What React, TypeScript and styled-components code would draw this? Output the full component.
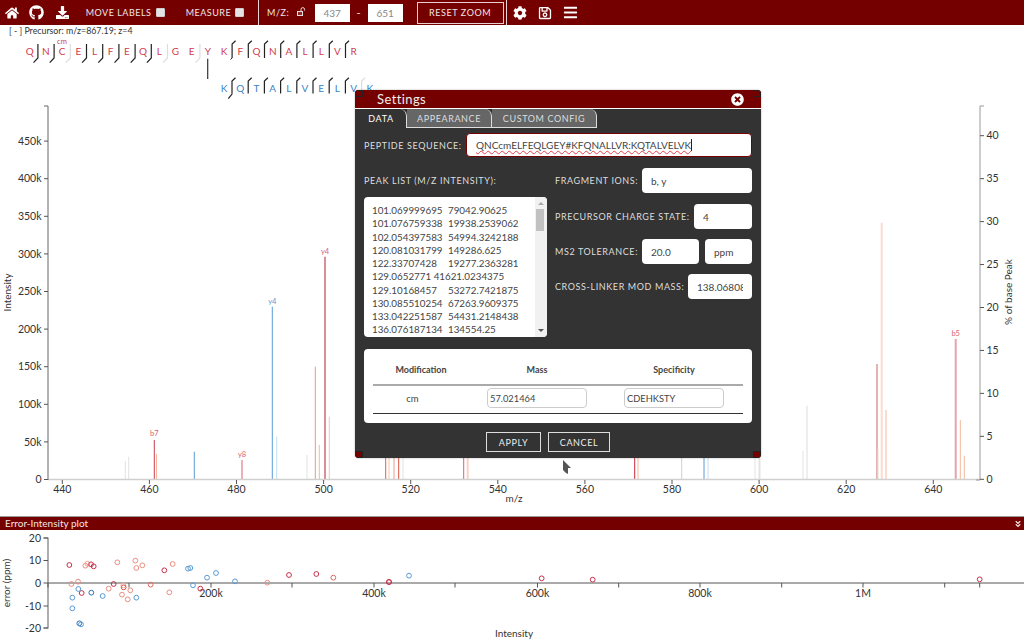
import React from "react";
import styled, { createGlobalStyle } from "styled-components";
import {
  FaHome,
  FaGithub,
  FaDownload,
  FaCog,
  FaRegSave,
  FaBars,
  FaTimesCircle,
  FaAngleDoubleDown,
} from "react-icons/fa";

const MAROON = "#750000";
const FONT = `Lato, "Open Sans", "Liberation Sans", sans-serif`;

const Global = createGlobalStyle`
  html, body { margin: 0; padding: 0; background: #fff; overflow: hidden; }
  body { font-family: ${FONT}; }
  * { box-sizing: border-box; }
`;

const Page = styled.div`
  position: relative;
  width: 1024px;
  height: 644px;
  display: flex;
  flex-direction: column;
  overflow: hidden;
`;

/* ---------- top toolbar ---------- */
const TopBar = styled.div`
  flex: none;
  height: 25px;
  background: ${MAROON};
  display: flex;
  align-items: center;
  color: #fff;
`;
const IconSlot = styled.div<{ $w: number }>`
  width: ${(p) => p.$w}px;
  display: flex;
  justify-content: center;
  align-items: center;
  flex: none;
`;
const BarLabel = styled.span<{ $ml: number; $w: number }>`
  margin-left: ${(p) => p.$ml}px;
  width: ${(p) => p.$w}px;
  flex: none;
  font-size: 9px;
  letter-spacing: 0.5px;
  color: #efe4e4;
  white-space: nowrap;
`;
const Check = styled.span`
  width: 9px;
  height: 9px;
  margin-left: 3px;
  flex: none;
  background: #e4e4e4;
  border: 1px solid #cfcfcf;
  border-radius: 1px;
`;
const Divider = styled.span<{ $ml: number }>`
  margin-left: ${(p) => p.$ml}px;
  width: 1px;
  height: 25px;
  flex: none;
  background: #ead6d6;
`;
const LockIcon = styled.svg`
  display: block;
  margin-bottom: 3px;
`;
const RangeInput = styled.input`
  width: 35px;
  height: 18px;
  flex: none;
  border: 0;
  padding: 0;
  text-align: center;
  font: 10px ${FONT};
  color: #888;
  background: #fff;
`;
const Dash = styled.span`
  width: 18px;
  text-align: center;
  font-size: 11px;
  color: #f3e6e6;
  flex: none;
`;
const ResetButton = styled.button`
  margin-left: 14px;
  width: 87px;
  height: 22px;
  flex: none;
  background: ${MAROON};
  border: 1px solid #e8cfcf;
  color: #f2e4e4;
  font: 9px ${FONT};
  letter-spacing: 0.6px;
  padding: 0;
`;

/* ---------- spectrum ---------- */
const ChartArea = styled.div`
  position: relative;
  flex: none;
  height: 491px;
`;
const ChartSvg = styled.svg`
  display: block;
  width: 1024px;
  height: 491px;
  font-family: ${FONT};
`;
const PrecursorLine = styled.div`
  position: absolute;
  left: 9px;
  top: 0;
  font-size: 8.8px;
  line-height: 12px;
  color: #333;
  white-space: pre;
`;

/* ---------- error plot ---------- */
const ErrorBar = styled.div`
  flex: none;
  height: 14px;
  border-top: 1px solid #999;
  background: ${MAROON};
  color: #f2e4e4;
  font-size: 10px;
  line-height: 13px;
  padding: 0 2px 0 5px;
  display: flex;
  justify-content: space-between;
  align-items: center;
`;
const ErrorSvg = styled.svg`
  display: block;
  width: 1024px;
  height: 114px;
  flex: none;
  font-family: ${FONT};
`;

/* ---------- settings modal ---------- */
const Modal = styled.div`
  position: absolute;
  left: 355px;
  top: 90px;
  width: 406px;
  height: 368px;
  background: #333;
  border-radius: 4px;
  overflow: hidden;
  display: flex;
  flex-direction: column;
  box-shadow: 0 0 2px rgba(0, 0, 0, 0.35);
`;
const ModalHeader = styled.div`
  flex: none;
  height: 19px;
  background: ${MAROON};
  border-bottom: 1px solid #fff;
  display: flex;
  align-items: center;
  justify-content: space-between;
  padding: 0 17px 0 22px;
  color: #eee;
  font-size: 13px;
  letter-spacing: 0.4px;
`;
const TabRow = styled.div`
  flex: none;
  height: 19px;
  display: flex;
  padding-left: 1px;
`;
const Tab = styled.div<{ $w: number; $active?: boolean }>`
  width: ${(p) => p.$w}px;
  background: ${(p) => (p.$active ? "#333" : "#666")};
  border-right: 1px solid #ddd;
  border-bottom: ${(p) => (p.$active ? "0" : "1px solid #ddd")};
  border-top-right-radius: 7px;
  color: ${(p) => (p.$active ? "#fff" : "#ddd")};
  font-size: 9px;
  letter-spacing: 0.6px;
  line-height: 19px;
  text-align: center;
`;
const FieldRow = styled.div<{ $mt?: number }>`
  display: flex;
  align-items: center;
  justify-content: space-between;
  margin-top: ${(p) => p.$mt ?? 0}px;
`;
const PeptideRow = styled(FieldRow)`
  flex: none;
  margin: 5px 9px 0;
`;
const FieldLabel = styled.label`
  font-size: 9px;
  letter-spacing: 0.6px;
  color: #ddd;
  white-space: nowrap;
`;
const PeptideBox = styled.div`
  width: 286px;
  height: 24px;
  background: #fff;
  border: 1px solid ${MAROON};
  border-radius: 4px;
  padding-left: 9px;
  display: flex;
  align-items: center;
  font-size: 10px;
  color: #444;
  white-space: nowrap;
`;
const Spell = styled.span`
  text-decoration: underline wavy #e0404a 1px;
  text-underline-offset: 1px;
  border-right: 1px solid #222;
`;
const Columns = styled.div`
  flex: none;
  display: flex;
  justify-content: space-between;
  margin: 11px 9px 0;
`;
const LeftColumn = styled.div`
  width: 183px;
`;
const RightColumn = styled.div`
  width: 197px;
`;
const PeakTitle = styled.div`
  height: 25px;
  line-height: 25px;
  margin-bottom: 4px;
  font-size: 9px;
  letter-spacing: 0.6px;
  color: #ddd;
`;
const PeakBox = styled.div`
  position: relative;
  height: 140px;
  background: #fff;
  border-radius: 4px;
  overflow: hidden;
  padding: 7px 0 0 8px;
  font-size: 9.8px;
  line-height: 13.27px;
  color: #444;
  white-space: pre;
  tab-size: 76px;
`;
const ScrollTrack = styled.div`
  position: absolute;
  right: 0;
  top: 0;
  bottom: 0;
  width: 12px;
  background: #f1f1f1;
`;
const ScrollThumb = styled.div`
  position: absolute;
  left: 1px;
  right: 3px;
  top: 12px;
  height: 22px;
  background: #c1c1c1;
`;
const ScrollArrow = styled.div<{ $down?: boolean }>`
  position: absolute;
  left: 3px;
  ${(p) => (p.$down ? "bottom: 5px;" : "top: 5px;")}
  width: 0;
  height: 0;
  border-left: 3px solid transparent;
  border-right: 3px solid transparent;
  ${(p) => (p.$down ? "border-top: 3px solid #555;" : "border-bottom: 3px solid #aaa;")}
`;
const ValueInput = styled.input<{ $w: number }>`
  width: ${(p) => p.$w}px;
  height: 25px;
  flex: none;
  border: 0;
  border-radius: 4px;
  background: #fff;
  padding: 0 9px;
  font: 10px ${FONT};
  color: #444;
  outline: none;
`;
const InputPair = styled.div`
  display: flex;
  gap: 6px;
`;
const TablePanel = styled.div`
  flex: none;
  height: 74px;
  margin: 12px 9px 0;
  background: #fff;
  border-radius: 4px;
  padding: 0 9px;
`;
const TableHead = styled.div`
  display: grid;
  grid-template-columns: 96px 136px 138px;
  height: 37px;
  border-bottom: 2px solid #aaa;
  align-items: center;
  justify-items: center;
  padding-top: 5px;
  font-size: 9px;
  font-weight: 700;
  color: #444;
`;
const TableRow = styled.div`
  display: grid;
  grid-template-columns: 96px 136px 138px;
  height: 28px;
  border-bottom: 1px solid #333;
  align-items: center;
  justify-items: center;
  padding-bottom: 3px;
`;
const ModCell = styled.div`
  padding-right: 17px;
  font-size: 9.5px;
  color: #444;
`;
const MassInput = styled.input`
  width: 100px;
  height: 20px;
  border: 1px solid #ccc;
  border-radius: 4px;
  padding: 0 2px;
  font: 9.3px ${FONT};
  color: #444;
  background: #fff;
`;
const ButtonRow = styled.div`
  flex: none;
  display: flex;
  gap: 7px;
  margin-top: 9px;
  padding-left: 131px;
`;
const ModalButton = styled.button<{ $w: number }>`
  width: ${(p) => p.$w}px;
  height: 20px;
  background: #333;
  border: 1px solid #ddd;
  color: #eee;
  font: 9px ${FONT};
  letter-spacing: 0.6px;
  padding: 0;
`;
const Handle = styled.div<{ $x: "left" | "right"; $y: "top" | "bottom" }>`
  position: absolute;
  ${(p) => p.$x}: 0;
  ${(p) => p.$y}: 0;
  width: 8px;
  height: 7px;
  background: ${MAROON};
  border: 1px solid #222;
`;
const Cursor = styled.svg`
  position: absolute;
  left: 562px;
  top: 460px;
`;

/* ---------- data ---------- */
type Peak = [number, number, string, number?];
const GRAY = "#e2e2e2";
const PEACH = "#f6b89c";
const SALMON = "#e89a8e";
const RED = "#cf3d50";
const PINK = "#d98e98";
const BLUE = "#5b9bd5";
const LBLUE = "#c4def2";
const peaks: Peak[] = [
  [125.3, 460.7, GRAY],
  [128.7, 456.7, GRAY],
  [154.3, 440, RED],
  [156.5, 454, PEACH],
  [194.3, 451.7, BLUE],
  [242, 460, "#d9606f"],
  [272.3, 306.7, BLUE],
  [276.7, 436.7, LBLUE],
  [307, 455, GRAY],
  [315.3, 366.7, SALMON],
  [319.3, 445, PEACH],
  [325, 256.7, PINK, 2],
  [329.3, 416.7, "#f6c6ae"],
  [385.7, 440, "#e0604f"],
  [389, 450, "#f6c6ae"],
  [394, 440, SALMON],
  [398.7, 440, "#d9503f"],
  [403, 440, GRAY],
  [463.7, 440, "#d9606f"],
  [467.7, 440, "#f8d3c4", 2],
  [634.7, 440, "#c8283a"],
  [638, 440, "#f6b89c"],
  [681.7, 440, "#cfcfcf"],
  [704, 440, BLUE],
  [708, 440, LBLUE],
  [755, 440, GRAY],
  [759.5, 440, GRAY, 2],
  [803, 451, GRAY],
  [807, 405.7, "#dddddd"],
  [877, 364, "#c96a5c"],
  [878, 449, "#e0e0e0"],
  [881.7, 222.7, "#fbdccf", 2],
  [886, 410, PEACH],
  [955.7, 339, "#e5a3ab", 2],
  [960.3, 420, PEACH],
  [964.3, 455.7, PEACH],
];
const peakLabels: [number, number, string, string][] = [
  [154.3, 436, "b7", "#d9606f"],
  [242, 457, "y8", "#d9606f"],
  [272.3, 304, "y4", BLUE],
  [325, 254, "y4", "#d9606f"],
  [955.7, 336, "b5", "#d9606f"],
];
const leftTicks = ["0", "50k", "100k", "150k", "200k", "250k", "300k", "350k", "400k", "450k"];
const rightTicks = [0, 5, 10, 15, 20, 25, 30, 35, 40];
const xTicks = [440, 460, 480, 500, 520, 540, 560, 580, 600, 620, 640];
const mzX = (m: number) => 62.3 + (m - 440) * 4.355;

const topLetters = "QNCELFEQLGEYKFQNALLVR".split("");
const bottomLetters = "KQTALVELVK".split("");
const topHooks: (string | null)[] = [
  "#222", "#222", "#ddd", "#222", "#222", "#222", "#222", "#222", "#ddd", null, "#ddd",
];
const letterX = (i: number) => 29.7 + i * 16.2;
const bottomX = (i: number) => 224 + i * 16.2;

const DR = "#c8304a";
const SL = "#ea8f80";
const BL = "#5b9bd5";
const DB = "#2f6fb5";
const points: [number, number, string][] = [
  [208, 165, DR], [214, 222, SL], [234, 215, SL], [256, 167, SL], [262, 161, "#f0a890"],
  [273, 163, DR], [281, 169, DR], [245, 249, DR], [235, 237, BL], [217, 263, BL],
  [217, 295, BL], [238, 340, DB], [243, 343, BL], [274, 248, DB], [308, 258, BL],
  [326, 236, SL], [341, 222, DR], [352, 157, SL], [366, 254, SL], [370, 226, "#f0b0a0"],
  [371, 232, "#d9503f"], [383, 268, SL], [391, 241, SL], [406, 152, SL], [409, 174, SL],
  [409, 263, BL], [427, 166, SL], [452, 224, "#dd6a60"], [493, 181, DR], [508, 247, SL],
  [518, 162, SL], [564, 176, BL], [571, 174, BL], [579, 226, BL], [601, 236, DR],
  [621, 203, BL], [648, 189, BL], [705, 214, BL], [802, 218, SL], [867, 195, DR],
  [949, 192, DR], [1000, 203, "#dd6a60"], [1167, 216, DR], [1167, 216, DR], [1227, 197, BL],
  [1625, 205, DR], [1778, 209, DR], [2939, 208, DR],
];
const errXTicks = [48, 129, 211, 292, 374, 455, 537.5, 618.7, 700, 781.7, 863, 944.7, 979.7];
const errXLabels: [number, string][] = [
  [211, "200k"], [374, "400k"], [537.5, "600k"], [700, "800k"], [863, "1M"],
];
const errYTicks: [number, string][] = [
  [538, "20"], [560.5, "10"], [583, "0"], [606, "-10"], [628, "-20"],
];
const peakRows = [
  "101.069999695\t79042.90625",
  "101.076759338\t19938.2539062",
  "102.054397583\t54994.3242188",
  "120.081031799\t149286.625",
  "122.33707428\t19277.2363281",
  "129.0652771 41621.0234375",
  "129.10168457\t53272.7421875",
  "130.085510254\t67263.9609375",
  "133.042251587\t54431.2148438",
  "136.076187134\t134554.25",
].join("\n");

const Noop = () => {};

export default function App() {
  return (
    <Page>
      <Global />
      <TopBar>
        <IconSlot $w={23}><FaHome size={14} /></IconSlot>
        <IconSlot $w={27}><FaGithub size={15} /></IconSlot>
        <IconSlot $w={24}><FaDownload size={13} /></IconSlot>
        <BarLabel $ml={11.7} $w={67}>MOVE LABELS</BarLabel>
        <Check />
        <BarLabel $ml={21} $w={46.4}>MEASURE</BarLabel>
        <Check />
        <Divider $ml={14} />
        <BarLabel $ml={8} $w={22}>M/Z:</BarLabel>
        <IconSlot $w={25.5}>
          <LockIcon width="9" height="9" viewBox="0 0 9 9">
            <rect x="0.5" y="4.5" width="5" height="4" fill="#8a2a2a" stroke="#eadcdc" strokeWidth="1" />
            <path d="M4 4.5 V2.4 a1.8 1.8 0 0 1 3.6 0 V3.6" fill="none" stroke="#eadcdc" strokeWidth="1" />
          </LockIcon>
        </IconSlot>
        <RangeInput readOnly value="437" />
        <Dash>-</Dash>
        <RangeInput readOnly value="651" />
        <ResetButton>RESET ZOOM</ResetButton>
        <Divider $ml={2} />
        <IconSlot $w={26}><FaCog size={14} /></IconSlot>
        <IconSlot $w={24}><FaRegSave size={14} /></IconSlot>
        <IconSlot $w={28}><FaBars size={15} /></IconSlot>
      </TopBar>

      <ChartArea>
        <ChartSvg viewBox="0 25 1024 491">
          {/* fragment sequence */}
          {topLetters.map((l, i) => (
            <text key={i} x={letterX(i)} y={54.5} textAnchor="middle" fontSize={10} fill="#cf3d50">{l}</text>
          ))}
          <text x={62} y={43.5} textAnchor="middle" fontSize={7.5} fill="#cf3d50">cm</text>
          {topHooks.map((c, i) =>
            c ? (
              <path key={i} d={`M${letterX(i) + 8.2} 44 V58 L${letterX(i) + 3.8} 62.7`} fill="none" stroke={c} strokeWidth={1.2} />
            ) : null
          )}
          {Array.from({ length: 8 }).map((_, i) => (
            <path key={i} d={`M${letterX(12 + i) + 8} 58 V44 L${letterX(12 + i) + 11.5} 40.7`} fill="none" stroke="#222" strokeWidth={1.2} />
          ))}
          <path d="M232.1 58 L230.5 59.5" stroke="#222" strokeWidth={1} fill="none" />
          <path d="M207.7 58.7 V79" stroke="#333" strokeWidth={1.2} />
          {bottomLetters.map((l, i) => (
            <text key={i} x={bottomX(i)} y={92} textAnchor="middle" fontSize={10} fill="#3b82c4">{l}</text>
          ))}
          {Array.from({ length: 9 }).map((_, i) => (
            <path
              key={i}
              d={`M${bottomX(i) + 8} 93.5 V81 L${bottomX(i) + 11.5} 77.7`}
              fill="none"
              stroke={i === 8 ? "#ddd" : "#222"}
              strokeWidth={1.2}
            />
          ))}
          <path d="M232 93.5 V94 L228.3 98.7" stroke="#222" strokeWidth={1.2} fill="none" />

          {/* peaks */}
          {peaks.map(([x, top, c, w], i) => (
            <line key={i} x1={x} x2={x} y1={top} y2={479} stroke={c} strokeWidth={w ?? 1} />
          ))}
          {peakLabels.map(([x, y, t, c], i) => (
            <text key={i} x={x} y={y} textAnchor="middle" fontSize={7.5} fill={c}>{t}</text>
          ))}

          {/* axes */}
          <line x1={48} x2={980} y1={479.5} y2={479.5} stroke="#cfcfcf" strokeWidth={1.5} />
          <path d="M44 106 H48 V480" fill="none" stroke="#666" strokeWidth={1} />
          <path d="M984 106 H980 V480 H976" fill="none" stroke="#999" strokeWidth={1} />
          {leftTicks.map((t, i) => {
            const y = 479.5 - i * 37.6;
            return (
              <g key={t}>
                <line x1={44} x2={48} y1={y} y2={y} stroke="#555" />
                <text x={41.5} y={y + 3.6} textAnchor="end" fontSize={10.5} fill="#333">{t}</text>
              </g>
            );
          })}
          {rightTicks.map((t, i) => {
            const y = 479.3 - i * 42.95;
            return (
              <g key={t}>
                <line x1={980} x2={984} y1={y} y2={y} stroke="#555" />
                <text x={986.5} y={y + 3.6} fontSize={10.5} fill="#333">{t}</text>
              </g>
            );
          })}
          {xTicks.map((m) => (
            <g key={m}>
              <line x1={mzX(m)} x2={mzX(m)} y1={480} y2={484} stroke="#555" />
              <text x={mzX(m)} y={493} textAnchor="middle" fontSize={10.5} fill="#333">{m}</text>
            </g>
          ))}
          <text x={514} y={502} textAnchor="middle" fontSize={10} fill="#333">m/z</text>
          <text transform="translate(11 292.5) rotate(-90)" textAnchor="middle" fontSize={10} fill="#333">Intensity</text>
          <text transform="translate(1012 292) rotate(-90)" textAnchor="middle" fontSize={10} fill="#333">% of base Peak</text>
        </ChartSvg>
        <PrecursorLine>{"[ - ] Precursor: m/z=867.19; z=4"}</PrecursorLine>
      </ChartArea>

      <ErrorBar>
        <span>Error-Intensity plot</span>
        <FaAngleDoubleDown size={8} />
      </ErrorBar>
      <ErrorSvg viewBox="0 530 1024 114">
        <line x1={48} x2={1024} y1={583} y2={583} stroke="#555" />
        <path d="M43.5 538 H48 V628 H43.5" fill="none" stroke="#777" strokeWidth={1.2} />
        {errYTicks.map(([y, t]) => (
          <g key={t}>
            <line x1={43.5} x2={48} y1={y} y2={y} stroke="#555" />
            <text x={41} y={y + 3.6} textAnchor="end" fontSize={10.5} fill="#333">{t}</text>
          </g>
        ))}
        {errXTicks.map((x) => (
          <line key={x} x1={x} x2={x} y1={583} y2={587.5} stroke="#555" />
        ))}
        {errXLabels.map(([x, t]) => (
          <text key={t} x={x} y={597} textAnchor="middle" fontSize={10.5} fill="#333">{t}</text>
        ))}
        {points.map(([x, y, c], i) => (
          <circle key={i} cx={x / 3} cy={510 + y / 3} r={2.4} fill="none" stroke={c} strokeWidth={1} />
        ))}
        <text transform="translate(9.5 583) rotate(-90)" textAnchor="middle" fontSize={10} fill="#333">error (ppm)</text>
        <text x={514} y={637} textAnchor="middle" fontSize={10} fill="#333">Intensity</text>
      </ErrorSvg>

      <Modal>
        <ModalHeader>
          <span>Settings</span>
          <FaTimesCircle size={13} color="#fff" />
        </ModalHeader>
        <TabRow>
          <Tab $w={51} $active>DATA</Tab>
          <Tab $w={85}>APPEARANCE</Tab>
          <Tab $w={105}>CUSTOM CONFIG</Tab>
        </TabRow>
        <PeptideRow>
          <FieldLabel>PEPTIDE SEQUENCE:</FieldLabel>
          <PeptideBox><Spell>QNCcmELFEQLGEY#KFQNALLVR:KQTALVELVK</Spell></PeptideBox>
        </PeptideRow>
        <Columns>
          <LeftColumn>
            <PeakTitle>PEAK LIST (M/Z INTENSITY):</PeakTitle>
            <PeakBox>
              {peakRows}
              <ScrollTrack>
                <ScrollArrow />
                <ScrollThumb />
                <ScrollArrow $down />
              </ScrollTrack>
            </PeakBox>
          </LeftColumn>
          <RightColumn>
            <FieldRow>
              <FieldLabel>FRAGMENT IONS:</FieldLabel>
              <ValueInput $w={110} readOnly value="b, y" />
            </FieldRow>
            <FieldRow $mt={11}>
              <FieldLabel>PRECURSOR CHARGE STATE:</FieldLabel>
              <ValueInput $w={58} readOnly value="4" />
            </FieldRow>
            <FieldRow $mt={10}>
              <FieldLabel>MS2 TOLERANCE:</FieldLabel>
              <InputPair>
                <ValueInput $w={57} readOnly value="20.0" />
                <ValueInput $w={47} readOnly value="ppm" />
              </InputPair>
            </FieldRow>
            <FieldRow $mt={10}>
              <FieldLabel>CROSS-LINKER MOD MASS:</FieldLabel>
              <ValueInput $w={64} readOnly value="138.06808" />
            </FieldRow>
          </RightColumn>
        </Columns>
        <TablePanel>
          <TableHead>
            <span>Modification</span>
            <span>Mass</span>
            <span>Specificity</span>
          </TableHead>
          <TableRow>
            <ModCell>cm</ModCell>
            <MassInput readOnly value="57.021464" onChange={Noop} />
            <MassInput readOnly value="CDEHKSTY" onChange={Noop} />
          </TableRow>
        </TablePanel>
        <ButtonRow>
          <ModalButton $w={55}>APPLY</ModalButton>
          <ModalButton $w={62}>CANCEL</ModalButton>
        </ButtonRow>
        <Handle $x="left" $y="top" />
        <Handle $x="right" $y="top" />
        <Handle $x="left" $y="bottom" />
        <Handle $x="right" $y="bottom" />
      </Modal>
      <Cursor width="10" height="15" viewBox="0 0 10 15">
        <path d="M1 0 L9 8 L6 8 L6 14 L4 13 L1 10 Z" fill="#555" />
      </Cursor>
    </Page>
  );
}
